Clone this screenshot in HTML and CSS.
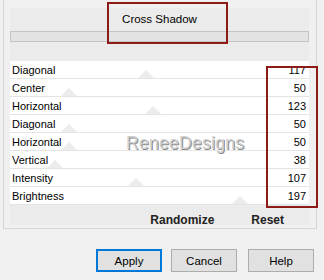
FILE: index.html
```html
<!DOCTYPE html>
<html lang="en">
<head>
    <meta charset="UTF-8">
    <title>Cross Shadow</title>
    <link rel="stylesheet" href="styles.css">
</head>
<body>
    <div class="dialog">
        <div class="group">
            <div class="panel">
                <div class="title">Cross Shadow</div>
                <div class="bar"></div>
                <div class="rows">
                    <div class="row"><span class="thumb" style="left:128px"></span><span>Diagonal</span><span class="val">117</span></div>
                    <div class="row"><span class="thumb" style="left:51px"></span><span>Center</span><span class="val">50</span></div>
                    <div class="row"><span class="thumb" style="left:135px"></span><span>Horizontal</span><span class="val">123</span></div>
                    <div class="row"><span class="thumb" style="left:51px"></span><span>Diagonal</span><span class="val">50</span></div>
                    <div class="row"><span class="thumb" style="left:51px"></span><span>Horizontal</span><span class="val">50</span></div>
                    <div class="row"><span class="thumb" style="left:37px"></span><span>Vertical</span><span class="val">38</span></div>
                    <div class="row"><span class="thumb" style="left:118px"></span><span>Intensity</span><span class="val">107</span></div>
                    <div class="row"><span class="thumb" style="left:222px"></span><span>Brightness</span><span class="val">197</span></div>
                </div>
                <div class="actions">
                    <span>Randomize</span>
                    <span>Reset</span>
                </div>
            </div>
        </div>
        <div class="buttons">
            <button class="btn default">Apply</button>
            <button class="btn">Cancel</button>
            <button class="btn">Help</button>
        </div>

        <!-- annotations -->
        <div class="mark mark-title"></div>
        <div class="mark mark-values"></div>
        <div class="watermark">ReneeDesigns</div>
    </div>
</body>
</html>
```

FILE: styles.css
```css
body {
    margin: 0;
    background: #f0f0f0;
    font-family: 'Liberation Sans', Arial, sans-serif;
    font-size: 11px;
    color: #000;
}
.dialog {
    position: relative;
    width: 324px;
    height: 280px;
    overflow: hidden;
}
.group {
    margin: 0 7px 0 3px;
    padding: 8px 7px 3px 6px;
    border: 1px solid #d6d6d6;
    border-top: none;
}
.panel {
    background: #ebebeb;
}
.title {
    height: 22px;
    line-height: 22px;
    text-align: center;
    font-size: 11.5px;
}
.bar {
    height: 9px;
    margin-top: 1px;
    background: #e3e3e3;
    border: 1px solid #c4c4c4;
}
.rows {
    margin-top: 19px;
}
.row {
    position: relative;
    display: flex;
    justify-content: space-between;
    height: 17px;
    line-height: 19px;
    padding: 0 3px 0 2px;
    background: #fff;
    border-bottom: 1px solid #e4e4e4;
}
.row span {
    position: relative;
}
.row .thumb {
    position: absolute;
    bottom: 0;
    width: 0;
    height: 0;
    border-left: 8px solid transparent;
    border-right: 8px solid transparent;
    border-bottom: 8px solid #ececec;
}
.actions {
    display: flex;
    justify-content: flex-end;
    gap: 37px;
    height: 20px;
    line-height: 30px;
    padding-right: 25px;
    font-weight: 700;
    font-size: 12px;
    color: #222;
}
.buttons {
    display: flex;
    justify-content: flex-end;
    gap: 9px;
    margin: 20px 10px 0 0;
}
.btn {
    width: 66px;
    height: 23px;
    padding: 0;
    background: #e1e1e1;
    border: 1px solid #adadad;
    font-family: 'Liberation Sans', Arial, sans-serif;
    font-size: 11.5px;
    color: #000;
}
.btn:last-child {
    margin-left: 2px;
}
.btn.default {
    border: 2px solid #0078d7;
}
.mark {
    position: absolute;
    border: 2px solid #8c1a17;
}
.mark-title {
    left: 107px;
    top: 2px;
    width: 117px;
    height: 38px;
}
.mark-values {
    left: 266px;
    top: 66px;
    width: 48px;
    height: 138px;
}
.watermark {
    position: absolute;
    left: 126px;
    top: 133px;
    font-size: 17.5px;
    letter-spacing: 0.3px;
    color: #cfcfcf;
    text-shadow: 1px 1px 0 #8a8a8a, -1px -1px 0 #fff;
}
```
